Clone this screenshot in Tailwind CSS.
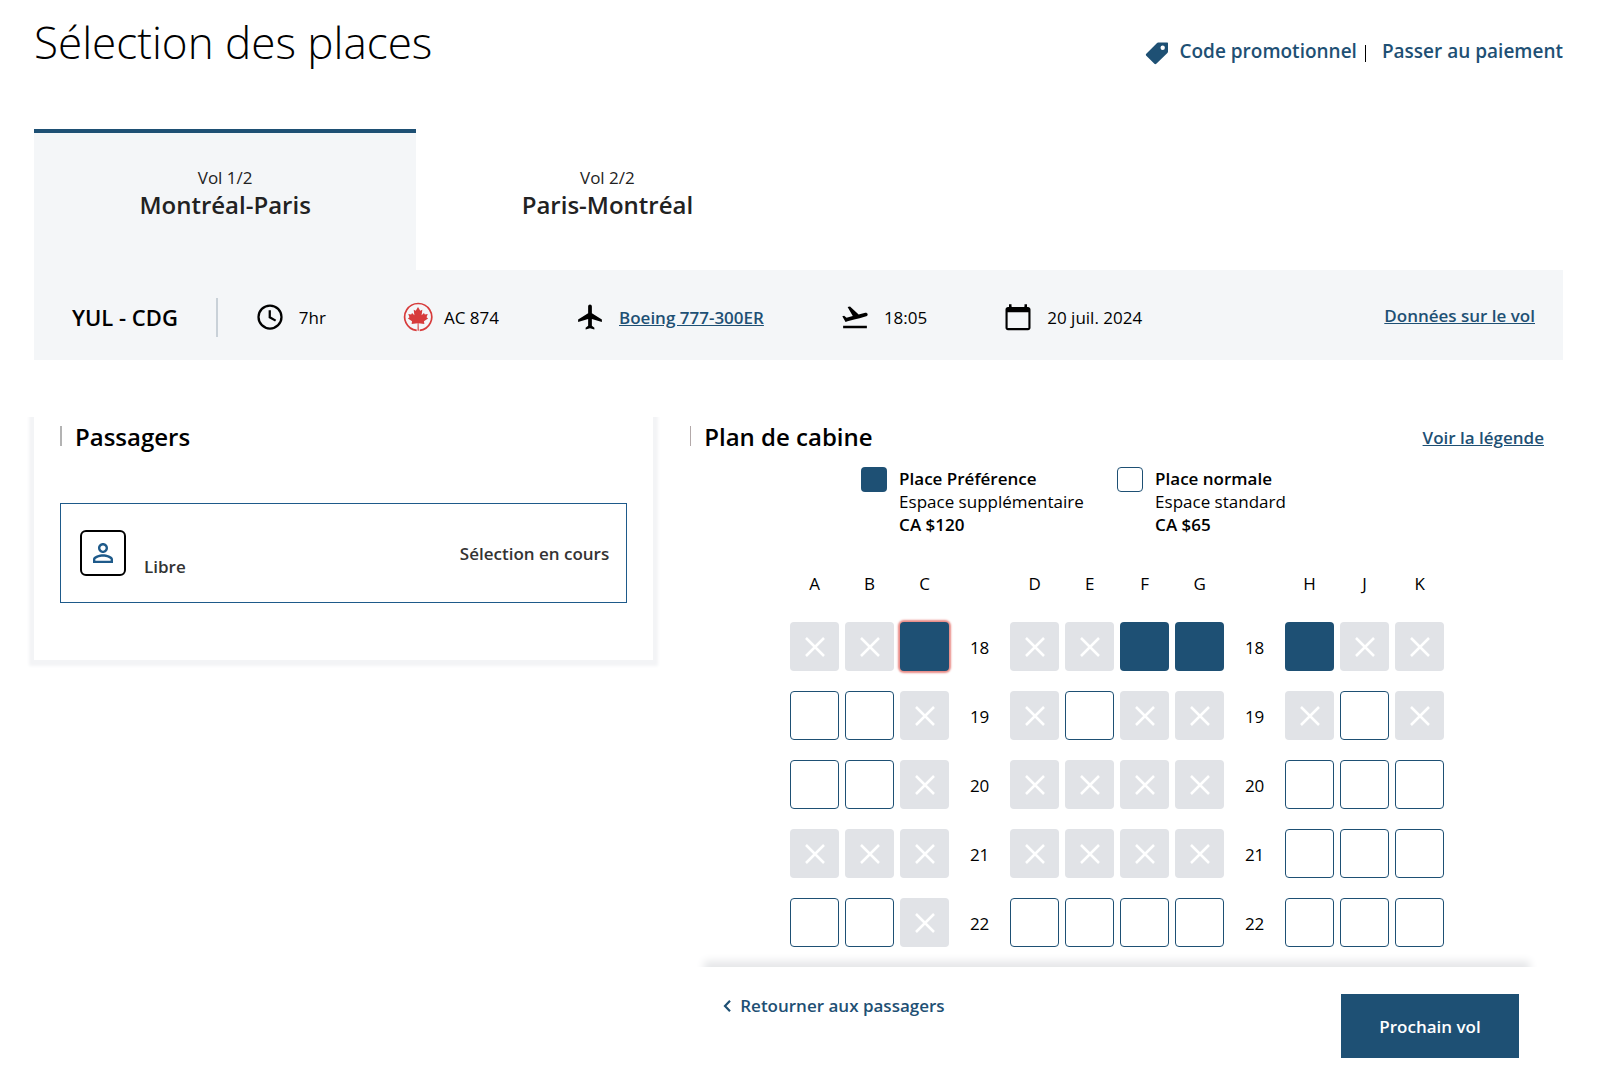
<!DOCTYPE html>
<html lang="fr">
<head>
    <meta charset="UTF-8">
    <meta name="viewport" content="width=device-width, initial-scale=1.0">
    <title>Sélection des places</title>
    <script src="https://cdn.jsdelivr.net/npm/@tailwindcss/browser@4"></script>
</head>
<body class="bg-white font-['Open_Sans',sans-serif] text-[17px] leading-[23px] text-black">
    <div class="pl-[34px] pr-[37px]">
        <!-- En-tête -->
        <header class="flex items-center justify-between pt-2.5">
            <h1 class="text-[44px] leading-[64px] font-light">Sélection des places</h1>
            <nav class="flex items-center gap-2 text-[19px] leading-7 font-semibold text-[#1e5074] pt-[18px]">
                <a href="#" class="flex items-center gap-2.5">
                    <svg class="size-6 mt-1" viewBox="0 0 24 24" fill="currentColor" aria-hidden="true">
                        <path fill-rule="evenodd" d="M13.2 1.6H22c.7 0 1 .4 1 1v8c0 .6-.2 1-.6 1.500L11.300 22.800c-.6.6-1.300.6-1.900 0L1.300 14.700c-.6-.6-.6-1.300 0-1.900L11.800 2.200c.4-.4.9-.6 1.400-.6zM17.700 4.600a2.200 2.200 0 1 0 0 4.400 2.200 2.200 0 0 0 0-4.400z"/>
                    </svg>
                    Code promotionnel
                </a>
                <span class="h-[17px] w-px bg-black mr-2 mt-1"></span>
                <a href="#">Passer au paiement</a>
            </nav>
        </header>

        <!-- Onglets des vols -->
        <div class="flex mt-[55px]" role="tablist">
            <button role="tab" aria-selected="true" class="w-1/4 h-[141px] border-t-4 border-[#1e5074] bg-[#f4f6f8] pb-4 text-[#222]">
                <span class="block">Vol 1/2</span>
                <span class="block text-[24px] leading-8 font-semibold">Montréal-Paris</span>
            </button>
            <button role="tab" aria-selected="false" class="w-1/4 h-[141px] border-t-4 border-transparent pb-4 text-[#222]">
                <span class="block">Vol 2/2</span>
                <span class="block text-[24px] leading-8 font-semibold">Paris-Montréal</span>
            </button>
        </div>

        <!-- Détails du vol -->
        <section class="flex items-center h-[90px] bg-[#f4f6f8] pl-[38px] pr-7 pt-1">
            <strong class="text-[22px] font-semibold">YUL - CDG</strong>
            <span class="w-0.5 h-[39px] bg-[#c9d1d8] ml-[38px]"></span>
            <ul class="flex items-center gap-[76px] ml-[37px]">
                <li class="flex items-center gap-3.5">
                    <svg class="size-[30px]" viewBox="0 0 24 24" fill="none" stroke="currentColor" stroke-width="1.8" aria-hidden="true">
                        <circle cx="12" cy="12" r="9.200"/>
                        <path d="M11.800 6.500v5.700l4.700 2.700"/>
                    </svg>
                    7hr
                </li>
                <li class="flex items-center gap-2.5">
                    <svg class="size-8" viewBox="0 0 32 32" aria-hidden="true">
                        <path d="M14.700 29.400A13.500 13.500 0 1 1 17.700 29.400" fill="none" stroke="#d73b3b" stroke-width="1.700"/>
                        <path fill="#d73b3b" transform="translate(1.600 1) scale(.9)" d="M16 5.500l2.500 4.200 2.300-1-.8 6 2.600-2.600 1 1.800 3.200-.5-1.300 3.500 1.700 1.300-4.600 3.300.5 2.900-6.500-.9.3 8.500h-1.400l.1-8.500-6.700.9.5-2.900-4.600-3.300 1.700-1.300-1.300-3.500 3.200.5 1-1.800 2.600 2.600-.8-6 2.300 1z"/>
                    </svg>
                    AC 874
                </li>
                <li class="flex items-center gap-3.5">
                    <svg class="size-[30px]" viewBox="0 0 24 24" fill="currentColor" aria-hidden="true">
                        <path d="M21.500 16v-2l-8-5V3.500c0-.83-.67-1.500-1.500-1.500s-1.500.67-1.500 1.500V9l-8 5v2l8-2.500V19l-2 1.500V22l3.500-1 3.500 1v-1.500l-2-1.500v-5.500l8 2.500z"/>
                    </svg>
                    <a href="#" class="font-semibold text-[#1e5074] underline">Boeing 777-300ER</a>
                </li>
                <li class="flex items-center gap-3.5">
                    <svg class="size-[30px]" viewBox="0 0 24 24" fill="currentColor" aria-hidden="true">
                        <path d="M2.500 19h19v2h-19zm19.570-9.360c-.21-.8-1.040-1.280-1.840-1.060L14.920 10l-6.900-6.430-1.930.51 4.140 7.170-4.970 1.330-1.970-1.540-1.450.39 1.820 3.160.77 1.330 1.600-.43 5.310-1.420 4.350-1.160L21 11.490c.81-.23 1.280-1.050 1.070-1.850z"/>
                    </svg>
                    18:05
                </li>
                <li class="flex items-center gap-3.5">
                    <svg class="size-[30px]" viewBox="0 0 24 24" fill="currentColor" aria-hidden="true">
                        <path d="M20 4h-.8V1.700h-2V4H6.800V1.700h-2V4H4c-1.100 0-2 .9-2 2v14.500c0 1.100.9 2 2 2h16c1.100 0 2-.9 2-2V6c0-1.100-.9-2-2-2zm.3 16.800H3.700V8.200h16.600v12.600z"/>
                        <path d="M4.800 3.500h2v4.200h-2zM17.200 3.500h2v4.200h-2z"/>
                    </svg>
                    20 juil. 2024
                </li>
            </ul>
            <a href="#" class="ml-auto mb-1 font-semibold text-[#1e5074] underline">Données sur le vol</a>
        </section>

        <main class="flex items-start mt-[57px]">
            <!-- Passagers -->
            <section class="w-[40.5%] h-[243px] px-[26px] pt-1 shadow-[0_1px_3px_5px_#f3f4f6] [clip-path:inset(0_-12px_-14px_-12px)]">
                <h2 class="flex items-center gap-[13px] text-[24px] leading-8 font-semibold"><span class="w-0.5 h-5 -mt-0.5 bg-[#b3b3b3]"></span>Passagers</h2>
                <button class="flex items-center w-full h-[100px] mt-[50px] pl-[19px] pr-[17px] border border-[#1e5a8a] font-semibold text-[#333]">
                    <span class="flex items-center justify-center size-[46px] rounded-md border-2 border-black">
                        <svg class="size-[30px] text-[#1e5a8a]" viewBox="0 0 24 24" fill="currentColor" aria-hidden="true">
                            <path d="M12 5.900c1.160 0 2.100.94 2.100 2.100s-.94 2.100-2.100 2.100S9.900 9.160 9.900 8s.94-2.100 2.100-2.100m0 9c2.970 0 6.100 1.460 6.100 2.100v1.100H5.900V17c0-.64 3.130-2.100 6.100-2.100M12 4C9.790 4 8 5.790 8 8s1.790 4 4 4 4-1.790 4-4-1.790-4-4-4zm0 9c-2.670 0-8 1.340-8 4v3h16v-3c0-2.660-5.330-4-8-4z"/>
                        </svg>
                    </span>
                    <span class="ml-[18px] mt-[26px]">Libre</span>
                    <span class="ml-auto">Sélection en cours</span>
                </button>
            </section>

            <!-- Plan de cabine -->
            <section class="flex-1 ml-[37px] mr-[19px] pt-1">
                <div class="flex items-center justify-between">
                    <h2 class="flex items-center gap-[13px] text-[24px] leading-8 font-semibold"><span class="w-px h-5 -mt-0.5 bg-[#b3a9a9]"></span>Plan de cabine</h2>
                    <a href="#" class="font-semibold text-[#1e5074] underline">Voir la légende</a>
                </div>

                <div class="flex justify-center mt-3.5">
                    <div class="flex gap-3 w-64">
                        <span class="w-[26px] h-[25px] rounded-sm bg-[#1e5074]"></span>
                        <p><strong class="font-semibold">Place Préférence</strong><br>Espace supplémentaire<br><strong class="font-semibold">CA $120</strong></p>
                    </div>
                    <div class="flex gap-3 w-64">
                        <span class="w-[26px] h-[25px] rounded-sm border border-[#1e5074]"></span>
                        <p><strong class="font-semibold">Place normale</strong><br>Espace standard<br><strong class="font-semibold">CA $65</strong></p>
                    </div>
                </div>

                <table class="mx-auto mt-9 table-fixed w-[660px] text-center">
                    <thead id="seatHead"></thead>
                    <tbody id="seatBody"></tbody>
                </table>

                <!-- Ombre au-dessus du pied de page -->
                <div class="h-4 mt-[-6px] overflow-hidden">
                    <div class="mt-4 mx-[18px] h-10 shadow-[0_-2px_8px_4px_#e6e7e9]"></div>
                </div>
                <footer class="flex items-start justify-between pl-8 pr-[25px] pt-[27px] pb-4 font-semibold">
                    <a href="#" class="flex items-center gap-2 text-[#1e5074]">
                        <svg class="w-2.5 h-3.5" viewBox="0 0 10 14" fill="none" stroke="currentColor" stroke-width="2.200" aria-hidden="true">
                            <path d="M8 1.800L3 7l5 5.200"/>
                        </svg>
                        Retourner aux passagers
                    </a>
                    <button class="w-[178px] h-16 bg-[#1e5074] text-white">Prochain vol</button>
                </footer>
            </section>
        </main>
    </div>

    <script>
        // x = occupée, o = normale, p = préférence, s = sélectionnée, espace = allée
        const letters = 'ABC DEFG HJK';
        const rows = {
            18: 'xxs xxpp pxx',
            19: 'oox xoxx xox',
            20: 'oox xxxx ooo',
            21: 'xxx xxxx ooo',
            22: 'oox oooo ooo'
        };
        const styles = {
            x: 'block mx-auto size-[49px] rounded bg-[#e1e3e7]',
            o: 'block mx-auto size-[49px] rounded border border-[#1e5074]',
            p: 'block mx-auto size-[49px] rounded bg-[#1e5074]',
            s: 'block mx-auto size-[49px] rounded bg-[#1e5074] shadow-[0_0_2px_2px_#e88a85]'
        };
        const cross = '<svg class="mx-auto size-5" viewBox="0 0 20 20" fill="none" stroke="#fff" stroke-width="2.5" aria-hidden="true"><path d="M1 1l18 18M19 1L1 19"/></svg>';

        document.getElementById('seatHead').innerHTML = '<tr>' + [...letters].map(l =>
            l === ' ' ? '<td></td>' : `<th scope="col" class="h-[23px] font-normal">${l}</th>`
        ).join('') + '</tr><tr><td class="h-[17px]"></td></tr>';

        document.getElementById('seatBody').innerHTML = Object.entries(rows).map(([num, seats]) =>
            '<tr>' + [...seats].map((s, i) => s === ' '
                ? `<td class="h-[69px] pt-0.5">${num}</td>`
                : `<td class="h-[69px] p-0"><button class="${styles[s]}" aria-label="${num}${letters[i]}"${s === 'x' ? ' disabled' : ''}>${s === 'x' ? cross : ''}</button></td>`
            ).join('') + '</tr>'
        ).join('');
    </script>
</body>
</html>
